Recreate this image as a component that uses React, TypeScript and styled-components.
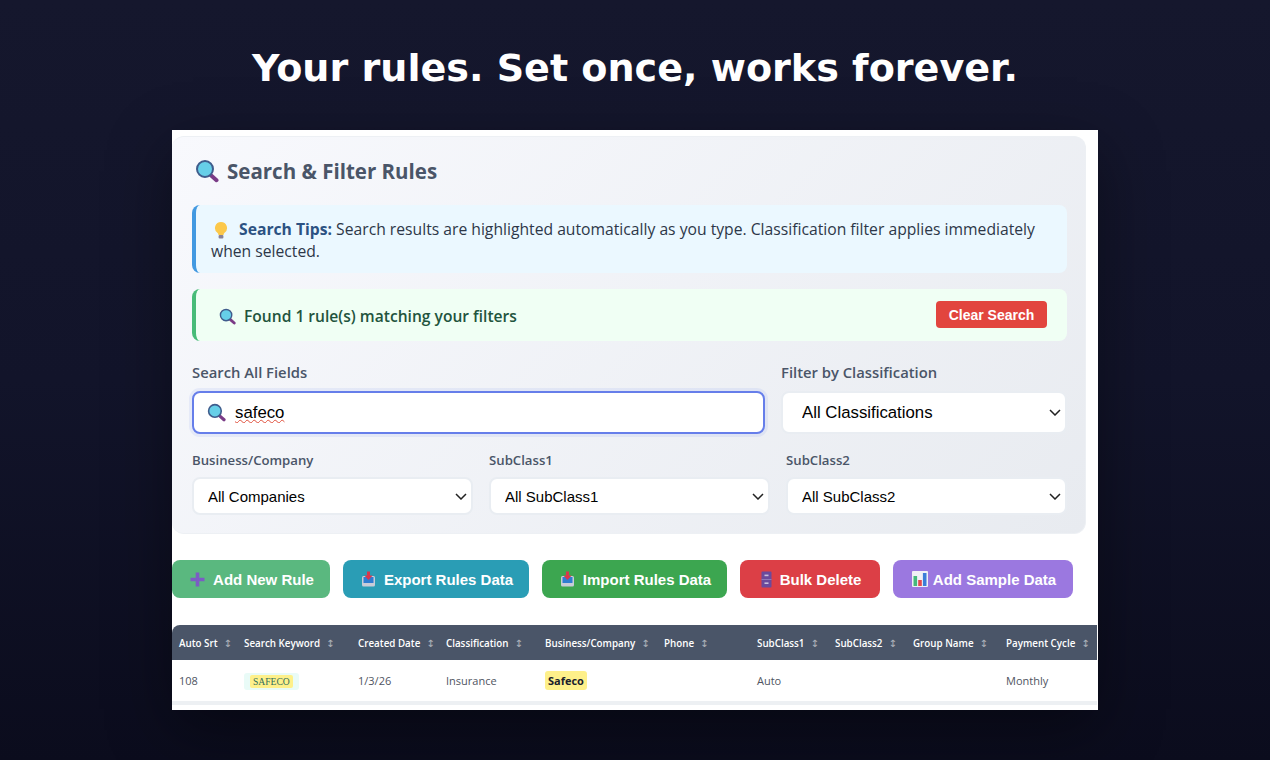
import React from 'react';
import styled, { createGlobalStyle } from 'styled-components';

const GlobalStyle = createGlobalStyle`
  html, body {
    margin: 0;
    height: 100%;
  }
  body {
    background: #12142a;
    font-family: "Open Sans", "Noto Sans", sans-serif;
  }
`;

const Page = styled.div`
  width: 1270px;
  height: 760px;
  overflow: hidden;
  display: flex;
  flex-direction: column;
  align-items: center;
  background: linear-gradient(180deg, #15172d 0%, #12142a 50%, #0b0c1d 100%);
`;

const Headline = styled.h1`
  margin: 46px 0 0;
  font: bold 38.1px/44px "DejaVu Sans", sans-serif;
  color: #fff;
`;

const Shot = styled.div`
  width: 926px;
  height: 580px;
  margin-top: 40px;
  background: #fff;
  overflow: hidden;
  box-shadow: 0 20px 60px rgba(0, 0, 0, 0.4);
`;

const FilterCard = styled.section`
  box-sizing: border-box;
  width: 914px;
  height: 398px;
  margin-top: 6px;
  padding: 19px 18px 0 20px;
  background: linear-gradient(135deg, #f8f9fd 0%, #e8ebf0 100%);
  border: 1px solid #edf0f4;
  border-left: 0;
  border-radius: 12px;
`;

const CardTitle = styled.h3`
  display: flex;
  align-items: center;
  gap: 8px;
  margin: 0 0 19px 3px;
  font-size: 20.5px;
  line-height: 30px;
  font-weight: 700;
  color: #4a5568;
`;

const Notice = styled.div<{ $tone: 'tip' | 'found' }>`
  box-sizing: border-box;
  border-left: 4px solid ${(p) => (p.$tone === 'tip' ? '#4299e1' : '#48bb78')};
  border-radius: 8px;
  background: ${(p) => (p.$tone === 'tip' ? '#ebf8ff' : '#f0fff4')};
`;

const TipBox = styled(Notice)`
  height: 68px;
  margin-bottom: 16px;
  padding: 13px 20px 0 15px;
  font-size: 15.7px;
  line-height: 22px;
  color: #2d3748;
`;

const TipIcon = styled.span`
  display: inline-block;
  width: 25px;
  height: 14px;
  margin-left: 3px;
  vertical-align: -2px;

  svg {
    display: block;
    margin-top: -2px;
  }
`;

const TipLead = styled.strong`
  font-weight: 700;
  color: #2c5282;
`;

const FoundBox = styled(Notice)`
  height: 52px;
  margin-bottom: 21px;
  padding: 0 20px 0 23px;
  display: flex;
  align-items: center;
  justify-content: space-between;
`;

const FoundText = styled.div`
  display: flex;
  align-items: center;
  gap: 8px;
  padding-top: 2px;
  font-size: 15.6px;
  font-weight: 600;
  color: #22543d;
`;

const ClearButton = styled.button`
  width: 111px;
  height: 27px;
  margin-top: -1px;
  padding: 0;
  border: 0;
  border-radius: 4px;
  background: #e2453e;
  color: #fff;
  font: bold 14px "Liberation Sans", sans-serif;
`;

const TopRow = styled.div`
  display: grid;
  grid-template-columns: 573px 286px;
  column-gap: 16px;
  margin-bottom: 16px;
`;

const BottomRow = styled.div`
  display: grid;
  grid-template-columns: 281px 281px 281px;
  column-gap: 16px;
`;

const Field = styled.div`
  display: flex;
  flex-direction: column;
`;

const BigLabel = styled.label`
  height: 29px;
  font-size: 14.8px;
  line-height: 20px;
  font-weight: 600;
  color: #4a5568;
`;

const SmallLabel = styled.label`
  height: 27px;
  font-size: 13.2px;
  line-height: 20px;
  font-weight: 600;
  color: #4a5568;
`;

const SearchWrap = styled.div`
  box-sizing: border-box;
  height: 43px;
  display: flex;
  align-items: center;
  gap: 9px;
  padding: 0 13px;
  background: #fff;
  border: 2px solid #667eea;
  border-radius: 8px;
  box-shadow: 0 0 0 3px rgba(102, 126, 234, 0.1);
`;

const SearchInput = styled.input`
  flex: 1;
  min-width: 0;
  padding: 0;
  border: 0;
  outline: 0;
  background: transparent;
  font: 16.8px "Liberation Sans", sans-serif;
  color: #000;
  text-decoration: underline wavy #e0503c 1.2px;
  text-underline-offset: 1px;
`;

const chevron =
  "url(\"data:image/svg+xml,%3Csvg xmlns='http://www.w3.org/2000/svg' width='12' height='7' viewBox='0 0 12 7'%3E%3Cpath d='M1 1l5 5 5-5' fill='none' stroke='%23222' stroke-width='1.5'/%3E%3C/svg%3E\")";

const Select = styled.select<{ $big?: boolean }>`
  box-sizing: border-box;
  width: 100%;
  height: ${(p) => (p.$big ? '43px' : '38px')};
  padding: ${(p) => (p.$big ? '0 19px' : '0 14px')};
  appearance: none;
  background: #fff ${chevron} no-repeat right 4px center;
  border: 2px solid #e9edf2;
  border-radius: 8px;
  font: ${(p) => (p.$big ? '16.8px' : '15px')} "Liberation Sans", sans-serif;
  color: #000;
`;

const ButtonRow = styled.div`
  display: flex;
  gap: 13px;
  margin-top: 26px;
`;

const ActionButton = styled.button<{ $bg: string; $w: number; $gap?: number }>`
  box-sizing: border-box;
  width: ${(p) => p.$w}px;
  height: 38px;
  padding: 0 0 0 2px;
  display: flex;
  align-items: center;
  justify-content: center;
  gap: ${(p) => p.$gap ?? 8}px;
  border: 0;
  border-radius: 8px;
  background: ${(p) => p.$bg};
  color: #fff;
  font: bold 15px "Liberation Sans", sans-serif;
`;

const COLUMNS = '65px 114px 88px 99px 119px 93px 78px 78px 93px 98px';

const TableHead = styled.div`
  display: grid;
  grid-template-columns: ${COLUMNS};
  width: 925px;
  height: 35px;
  margin-top: 27px;
  align-items: center;
  background: #4a5568;
  border-radius: 8px 0 0 0;
`;

const HeadCell = styled.div`
  padding: 1px 0 0 7px;
  white-space: nowrap;
  font-size: 9.8px;
  font-weight: 600;
  color: #fff;
`;

const SortMark = styled.span`
  margin-left: 6px;
  font-family: "DejaVu Sans", sans-serif;
  font-size: 10px;
  font-weight: 400;
  opacity: 0.55;
`;

const TableRow = styled.div`
  display: grid;
  grid-template-columns: ${COLUMNS};
  width: 925px;
  height: 41px;
  align-items: center;
  border-bottom: 4px solid #edf0f3;
`;

const Cell = styled.div`
  padding-left: 7px;
  font-size: 11px;
  color: #50555f;
`;

const KeywordChip = styled.span`
  display: inline-block;
  margin-top: 2px;
  padding: 3px 6px;
  background: #e9fbf7;
  border-radius: 3px;
  line-height: 10px;
`;

const KeywordMark = styled.mark`
  padding: 1px 3px;
  border-radius: 2px;
  background: #fef08a;
  color: #2f6f5c;
  font: 9.6px "Liberation Serif", serif;
`;

const BusinessMark = styled.mark`
  padding: 2px 3px;
  border-radius: 3px;
  background: #fef08a;
  color: #1a202c;
  font-weight: 700;
`;

const Magnifier = ({ size }: { size: number }) => (
  <svg width={size} height={size} viewBox="0 0 24 24">
    <path d="M14.5 15l7 6.2" stroke="#7a3b86" strokeWidth="4" strokeLinecap="round" />
    <circle cx="10" cy="10" r="8" fill="#66cfe8" stroke="#3f5c8c" strokeWidth="2" />
  </svg>
);

const Bulb = () => (
  <svg width="14" height="18" viewBox="0 0 14 18">
    <path d="M7 1a6 6 0 0 0-3.6 10.8c.7.6 1 1.2 1 2.2h5.2c0-1 .3-1.6 1-2.2A6 6 0 0 0 7 1z" fill="#fcc84a" />
    <rect x="4.6" y="14" width="4.8" height="3.4" rx="1" fill="#8a8296" />
  </svg>
);

const PlusIcon = () => (
  <svg width="15" height="15" viewBox="0 0 15 15">
    <path d="M7.5 0.5v14M0.5 7.5h14" stroke="#7b5cc4" strokeWidth="3.6" />
  </svg>
);

const TrayIcon = () => (
  <svg width="15" height="16" viewBox="0 0 15 16">
    <rect x="1" y="5" width="13" height="10.5" rx="1.5" fill="#c8ccd8" />
    <rect x="2.5" y="6" width="10" height="6" fill="#2f7dd1" />
    <path d="M6 0.5h3v4h2.6L7.5 9 3.4 4.5H6z" fill="#d9364c" />
  </svg>
);

const CabinetIcon = () => (
  <svg width="11" height="17" viewBox="0 0 11 17">
    <rect x="0.5" y="0.5" width="10" height="16" rx="1" fill="#6a4a9c" />
    <path d="M0.5 8.5h10" stroke="#8f78b8" strokeWidth="1" />
    <rect x="3.5" y="3.6" width="4" height="1.6" fill="#c9bfdc" />
    <rect x="3.5" y="11.4" width="4" height="1.6" fill="#c9bfdc" />
  </svg>
);

const ChartIcon = () => (
  <svg width="16" height="16" viewBox="0 0 16 16">
    <rect width="16" height="16" rx="1" fill="#f0f0f6" />
    <rect x="1.5" y="5" width="3.6" height="10" fill="#45b97c" />
    <rect x="6.2" y="9" width="3.6" height="6" fill="#e5484d" />
    <rect x="10.9" y="2" width="3.6" height="13" fill="#3b7dd8" />
  </svg>
);

const headers = [
  'Auto Srt',
  'Search Keyword',
  'Created Date',
  'Classification',
  'Business/Company',
  'Phone',
  'SubClass1',
  'SubClass2',
  'Group Name',
  'Payment Cycle',
];

export default function App() {
  return (
    <Page>
      <GlobalStyle />
      <Headline>Your rules. Set once, works forever.</Headline>
      <Shot>
        <FilterCard>
          <CardTitle>
            <Magnifier size={24} />
            Search &amp; Filter Rules
          </CardTitle>
          <TipBox as="div" $tone="tip">
            <TipIcon>
              <Bulb />
            </TipIcon>
            <TipLead>Search Tips:</TipLead> Search results are highlighted automatically as you type.
            Classification filter applies immediately when selected.
          </TipBox>
          <FoundBox $tone="found">
            <FoundText>
              <Magnifier size={17} />
              Found 1 rule(s) matching your filters
            </FoundText>
            <ClearButton>Clear Search</ClearButton>
          </FoundBox>
          <TopRow>
            <Field>
              <BigLabel>Search All Fields</BigLabel>
              <SearchWrap>
                <Magnifier size={19} />
                <SearchInput defaultValue="safeco" spellCheck={false} />
              </SearchWrap>
            </Field>
            <Field>
              <BigLabel>Filter by Classification</BigLabel>
              <Select $big>
                <option>All Classifications</option>
              </Select>
            </Field>
          </TopRow>
          <BottomRow>
            <Field>
              <SmallLabel>Business/Company</SmallLabel>
              <Select>
                <option>All Companies</option>
              </Select>
            </Field>
            <Field>
              <SmallLabel>SubClass1</SmallLabel>
              <Select>
                <option>All SubClass1</option>
              </Select>
            </Field>
            <Field>
              <SmallLabel>SubClass2</SmallLabel>
              <Select>
                <option>All SubClass2</option>
              </Select>
            </Field>
          </BottomRow>
        </FilterCard>

        <ButtonRow>
          <ActionButton $bg="#5ab87f" $w={158}>
            <PlusIcon />
            Add New Rule
          </ActionButton>
          <ActionButton $bg="#2a9db5" $w={186}>
            <TrayIcon />
            Export Rules Data
          </ActionButton>
          <ActionButton $bg="#3ca650" $w={185}>
            <TrayIcon />
            Import Rules Data
          </ActionButton>
          <ActionButton $bg="#dc3f46" $w={140}>
            <CabinetIcon />
            Bulk Delete
          </ActionButton>
          <ActionButton $bg="#9b78e0" $w={180} $gap={5}>
            <ChartIcon />
            Add Sample Data
          </ActionButton>
        </ButtonRow>

        <TableHead>
          {headers.map((h) => (
            <HeadCell key={h}>
              {h}
              <SortMark>↕</SortMark>
            </HeadCell>
          ))}
        </TableHead>
        <TableRow>
          <Cell>108</Cell>
          <Cell>
            <KeywordChip>
              <KeywordMark>SAFECO</KeywordMark>
            </KeywordChip>
          </Cell>
          <Cell>1/3/26</Cell>
          <Cell>Insurance</Cell>
          <Cell>
            <BusinessMark>Safeco</BusinessMark>
          </Cell>
          <Cell />
          <Cell>Auto</Cell>
          <Cell />
          <Cell />
          <Cell>Monthly</Cell>
        </TableRow>
      </Shot>
    </Page>
  );
}
